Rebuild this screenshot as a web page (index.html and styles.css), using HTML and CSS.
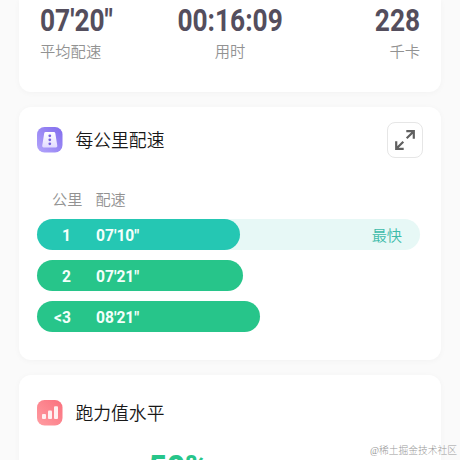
FILE: index.html
```html
<!DOCTYPE html>
<html lang="zh-CN">
<head>
<meta charset="utf-8">
<title>跑步详情</title>
<link rel="stylesheet" href="styles.css">
</head>
<body>
<main class="page">
  <section class="card summary">
    <div class="stat"><div class="value">07'20"</div><div class="label">平均配速</div></div>
    <div class="stat center"><div class="value">00:16:09</div><div class="label">用时</div></div>
    <div class="stat right"><div class="value">228</div><div class="label">千卡</div></div>
  </section>
  <section class="card pace">
    <header class="head">
      <svg class="icon" viewBox="0 0 26 26">
        <defs>
          <linearGradient id="violet" x1="0" y1="1" x2="1" y2="0"><stop offset="0" stop-color="#b3a5fb"/><stop offset="1" stop-color="#816ced"/></linearGradient>
          <linearGradient id="road" x1="0" y1="0" x2="0" y2="1"><stop offset="0" stop-color="#fff"/><stop offset="1" stop-color="#e2dcff"/></linearGradient>
        </defs>
        <rect width="25.5" height="25.5" rx="7.5" fill="url(#violet)"/>
        <path d="M8.7 5h8.1q1.3 0 1.5 1.3l2 12.5q.2 1.6-1.4 1.6H6.6q-1.6 0-1.4-1.6l2-12.5Q7.4 5 8.7 5z" fill="url(#road)"/>
        <g fill="#7763df"><circle cx="12.8" cy="8.8" r="1.4"/><circle cx="12.8" cy="12.8" r="1.4"/><circle cx="12.8" cy="16.8" r="1.4"/></g>
      </svg>
      <h2>每公里配速</h2>
      <div class="expand">
        <svg viewBox="0 0 36 36" fill="none" stroke="#606060" stroke-width="2.2">
          <path d="M19.7 16.3L26.3 9.7M19.3 9.2H26.8V16.7M16.3 19.7L9.7 26.3M9.2 19.3V26.8H16.7"/>
        </svg>
      </div>
    </header>
    <div class="columns"><span>公里</span><span>配速</span></div>
    <div class="bars">
      <div class="track fastest"><div class="bar" style="width:203px"><b>1</b><b>07'10"</b></div><span class="tag">最快</span></div>
      <div class="track"><div class="bar" style="width:206px"><b>2</b><b>07'21"</b></div></div>
      <div class="track"><div class="bar" style="width:223px"><b>&lt;3</b><b>08'21"</b></div></div>
    </div>
  </section>
  <section class="card level">
    <header class="head">
      <svg class="icon" viewBox="0 0 26 26">
        <defs><linearGradient id="rose" x1="0" y1="1" x2="1" y2="0"><stop offset="0" stop-color="#ff9da2"/><stop offset="1" stop-color="#fa707d"/></linearGradient></defs>
        <rect width="25.5" height="25.5" rx="7.5" fill="url(#rose)"/>
        <g fill="#fff0f0"><rect x="5" y="14" width="4" height="5" rx="1"/><rect x="11" y="10.5" width="4" height="8.5" rx="1"/><rect x="17" y="6.2" width="4" height="12.8" rx="1"/></g>
      </svg>
      <h2>跑力值水平</h2>
    </header>
    <div class="percent">50%</div>
  </section>
</main>
<div class="watermark">@稀土掘金技术社区</div>
</body>
</html>
```
FILE: styles.css
```css
* { box-sizing: border-box; }
body {
  margin: 0;
  height: 460px;
  overflow: hidden;
  background: #fafafa;
  font-family: Roboto, "Noto Sans CJK SC", sans-serif;
}
.page {
  display: flex;
  flex-direction: column;
  gap: 15px;
  height: 460px;
  padding: 0 19px;
  overflow: hidden;
}
.card {
  flex: none;
  border-radius: 12px;
  background: #fff;
  box-shadow: 0 1px 6px rgba(0, 0, 0, .035);
}
.summary {
  display: grid;
  grid-template-columns: 1fr 1fr 1fr;
  height: 92px;
  padding: 2px 21px 0;
  border-radius: 0 0 12px 12px;
}
.value {
  display: inline-block;
  height: 37px;
  font-size: 32px;
  font-weight: 700;
  line-height: 36px;
  color: #544e5d;
  white-space: nowrap;
  transform: scaleX(.822);
  transform-origin: left;
}
.center { display: flex; flex-direction: column; align-items: center; }
.center .value { transform-origin: center; }
.right { text-align: right; }
.right .value { transform-origin: right; }
.label {
  font-size: 15.3px;
  font-weight: 350;
  line-height: 26px;
  color: #929292;
}
.pace { height: 253px; padding: 15px 18px 0; }
.head { display: flex; align-items: center; height: 36px; }
.icon { width: 26px; height: 26px; flex: none; }
h2 {
  margin: 2px 0 0 12.5px;
  font-size: 17.8px;
  font-weight: 350;
  line-height: 26px;
  color: #181818;
}
.expand {
  width: 36px;
  height: 36px;
  margin-left: auto;
  border: 1px solid #e6e6e6;
  border-radius: 8px;
}
.expand svg { display: block; width: 36px; height: 36px; margin: -1px; }
.columns {
  display: flex;
  gap: 13px;
  margin-top: 30px;
  padding-left: 15px;
  font-size: 15.2px;
  font-weight: 350;
  line-height: 24px;
  color: #929292;
}
.bars { display: grid; gap: 10px; margin-top: 7px; }
.track {
  display: flex;
  align-items: center;
  justify-content: space-between;
  width: 383px;
  height: 31px;
  border-radius: 16px;
}
.fastest { background: #e7f8f6; }
.bar {
  display: grid;
  grid-template-columns: 34px 1fr;
  column-gap: 25px;
  align-items: center;
  height: 31px;
  padding-top: 2px;
  border-radius: 16px;
  background: #27c58a;
  color: #f4fffb;
  font-size: 15.6px;
}
.bar b:first-child { text-align: right; }
.fastest .bar { background: #25c7b3; }
.tag { margin: -2px 18px 0 0; font-size: 15.2px; font-weight: 350; color: #3dbba9; }
.level { height: 120px; padding: 20px 18px 0; }
.percent {
  margin-top: 17px;
  padding-right: 103px;
  text-align: center;
  font-size: 31px;
  font-weight: 900;
  line-height: 38px;
  color: #27c58a;
}
.watermark {
  position: absolute;
  right: 3px;
  bottom: 2px;
  font-family: "Liberation Serif", "Noto Sans CJK SC", serif;
  font-size: 9.75px;
  font-weight: 300;
  line-height: 14px;
  color: #999;
}
```
